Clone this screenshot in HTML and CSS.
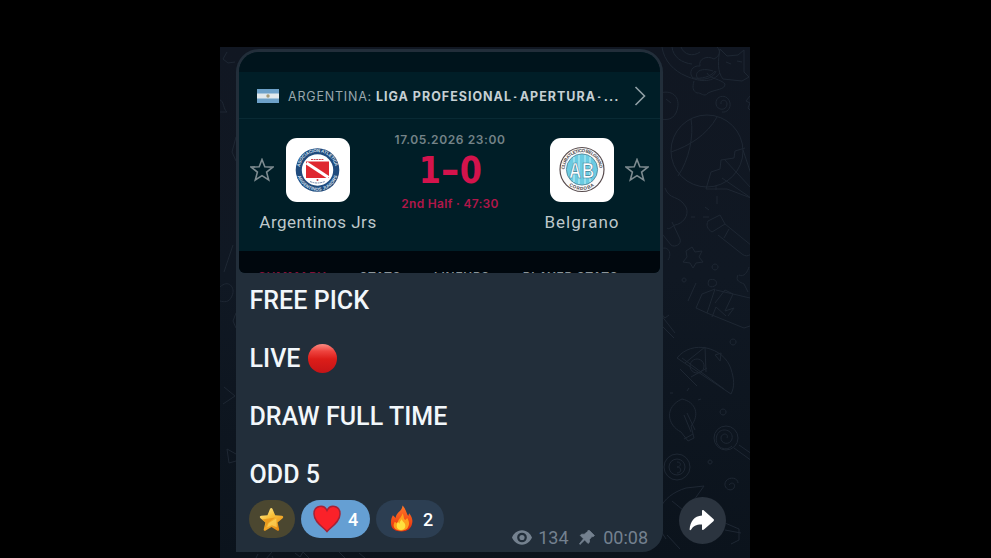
FILE: index.html
```
<!DOCTYPE html>
<html lang="en">

<head>
  <meta charset="UTF-8" />
  <meta name="viewport" content="width=device-width, initial-scale=1.0" />
  <title>Free pick</title>
  <link rel="stylesheet" href="styles.css">
</head>

<body>
  <div class="chat">
    <!-- wallpaper doodles -->
    <svg class="wallpaper" viewBox="0 0 530 511" fill="none">
      <path d="M442 0c2 14 12 24 24 29 16 7 27 6 34-3m-48-26c1 10 10 16 20 17m-11-17c3 8 12 10 19 5m17-5c4 4 3 9-3 12-7-4-16 0-14 7-8-1-12 7-7 12 8 1 18-1 22-7m-2 0c-12-4-20 1-15 8 9 1 16-2 18-8M500 2l7 7 11-1 6-5v22l5 5-7 4-19-2c-6-7-5-19-3-30m6 13 5 2m6-3 5 1M474 34c-2 7-1 10 3 12 4-1 7 5 11 0 8-4 17-3 17-9-4-5-15-5-18-11" />
      <path d="M501 57c-1-5 6-5 6 0 0 7-10 7-11 0-1-9 12-11 14-1 1 5-3 10-8 9M530 49l-4 5 4 2-2 5 2 2M440 46c14-4 22 6 16 20-4 7-9 7-16 6m6-20 5 4" />
      <circle cx="487" cy="104" r="36" />
      <path d="M471 72c3 17-2 41-13 57m-7-24c18-6 36-17 46-35m28 31-10 3-1 7-13 2-1 9-9 3-5 17h21l24 9-29-20m2-19 27 29m-8-38 10 30" />
      <path d="M445 141c5 13 13 6 21 19 4 9-4 17-11 18-4 2-6 5-8 3m-8 2 12 15c4 3 11-1 9-6l-8-17m44-36v4m1 6v8m-12 3 4 3m-18 7h4m8 0h6" />
      <path d="m488 174 12-6 5 9-13 8c-5-3-6-7-4-11m17 3 27 22c3 7-4 13-10 8l-24-19m11-6-5 9" />
      <path d="m472 200 3 5 7-1-3 6 4 5-7 1-3 5-3-5-7-1 4-5-1-6zM519 228c5 3 9-4 10-8m-11 8c-3 6 2 7 6 9l4 8M495 217a3 3 0 1 0 .1 0M464 231a2 2 0 1 0 .1 0M489 233c5-2 9 1 7 5-5 4-10 1-7-5" />
      <path d="M482 247l13-5-8 24-11-5zm14-4 34 8m-43 15 37 15 6-2m-38-9 4-10 10 9m-11-13 10-13 8 4-8 17 9-3-6 8m-32-33-8 18M440 203c7-6 13 3 8 10m-10 50 7 8 4-3m-9 9 14 14m-13-23 14 18" />
      <path d="M457 311c15-19 47-11 54 11 3 10 4 17 0 25l-54-36zm5 0 42 31m-39-26 20-16 1 25m-9-13a7 7 0 1 0 .1 0m18-4 6-2-1 8zM513 292a3 3 0 1 0 .1 0M460 322l17 17m-6-9 16-9" />
      <path d="M462 352c14 3 18 16 9 27l3 12-6 3-7-9c-14-7-17-25 1-33m2 16 7 17m-4-19 8 17m-11 9 9-5M503 362a3 3 0 1 0 .1 0M450 346h3m14-2 2-3m9 12 3-1" />
      <circle cx="506" cy="391" r="12" />
      <path d="M507 391c2-4-4-6-6-1-1 7 9 9 11 2 2-9-11-13-15-4-4 11 8 18 15 11m2 2 18 13m-13-16 13 9M490 413a2 2 0 1 0 .1 0" />
      <circle cx="457" cy="420" r="13" />
      <circle cx="457" cy="420" r="8" />
      <path d="M457 415c5 0 4 5 0 5 5 0 5 6 0 6m52 12c3-4 7-1 5 3-4 5-12-1-8-7 4-5 12-3 12 2M446 492c-16-22-6-43 20-51l18-2-10 14m-22 1 22 18m31 4 14 6v11l-8 4m-6-14 16 3M447 488l13 14" />
      <path d="M7 5 3 12l5 4 7-1M0 53c4 1 3 9 7 12H0M16 90l-4 15 4 9M13 198 4 225M0 240c8-8 16 0 12 9-3 7-8 6-12 5m16 12-3 8 3 7M4 340l11 9-12 8m13 50-9-5 2 14 7-2M38 507l-4 8m18-10-7 8m7-4 3 6M75 506l5 4 3-5 6 6m30-6 10 10m10-9 6 5" />
    </svg>

    <div class="bubble">
      <div class="photo">
        <div class="status"></div>
        <div class="league">
          <svg class="flag" viewBox="0 0 22 14">
            <path fill="#6da1c9" d="M0 0h22v14H0z" />
            <path fill="#e2e9ec" d="M0 4.5h22v5H0z" />
            <circle cx="11" cy="7" r="1.7" fill="#a59b79" />
          </svg>
          <span class="country">ARGENTINA:</span>
          <span class="name">LIGA PROFESIONAL <i>-</i> APERTURA <i>-</i> ...</span>
          <svg class="chevron" viewBox="0 0 12 20">
            <path d="m1.5 1 9 9-9 9" />
          </svg>
        </div>
        <div class="match">
          <svg class="star" viewBox="0 0 24 24">
            <path d="m12 1.5 2.8 7.2 8 .4-6.2 5 2.1 7.9-6.7-4.4L5.3 22l2.1-7.9-6.2-5 8-.4z" />
          </svg>
          <div class="team home">
            <div class="crest">
              <svg viewBox="0 0 64 64">
                <defs>
                  <path id="top1" d="M13.5 32a18 18 0 0 1 36 0" />
                  <path id="bot1" d="M10.8 32a20.7 20.7 0 0 0 41.4 0" />
                </defs>
                <circle cx="31.5" cy="32" r="21.8" fill="#204b7d" />
                <circle cx="31.5" cy="32" r="15.7" fill="#fff" />
                <g class="ring blue">
                  <text><textPath href="#top1" startOffset="3" textLength="50">ASOCIACION ATLETICA</textPath></text>
                  <text><textPath href="#bot1" startOffset="6" textLength="53">ARGENTINOS JUNIORS</textPath></text>
                </g>
                <path fill="#df2830" d="M20 23.5h23V40H20z" />
                <path stroke="#fff" stroke-width="3.2" d="m20.5 25 22 14.5" />
                <path stroke="#c4434d" stroke-dasharray="2 .6" d="M25 21.5h13" />
                <path stroke="#7185a7" stroke-dasharray="2 .6" d="M24 43.5q7 3 15 0" fill="none" />
                <circle cx="31.5" cy="42" r="1" fill="#c4434d" />
              </svg>
            </div>
            <p>Argentinos Jrs</p>
          </div>
          <div class="result">
            <p class="date">17.05.2026 23:00</p>
            <p class="score"><span>1</span><b>-</b><span>0</span></p>
            <p class="time">2nd Half · 47:30</p>
          </div>
          <div class="team away">
            <div class="crest">
              <svg viewBox="0 0 64 64">
                <defs>
                  <path id="top2" d="M14.6 31.5a17.4 17.4 0 0 1 34.8 0" />
                  <path id="bot2" d="M11.6 31.5a20.4 20.4 0 0 0 40.8 0" />
                </defs>
                <circle cx="32" cy="31.5" r="22" fill="#fafafa" stroke="#584c4e" stroke-width="1.2" />
                <circle cx="32" cy="31.5" r="15.6" fill="#6bcbe2" stroke="#477c91" stroke-width=".8" />
                <path stroke="#96dfed" stroke-width="2" d="M24 19v25m5-27v29m6-29v29m5-27v25" />
                <g class="ring dark">
                  <text><textPath href="#top2" startOffset="0" textLength="54">CLUB ATLETICO BELGRANO</textPath></text>
                  <text><textPath href="#bot2" startOffset="18" textLength="28">CORDOBA</textPath></text>
                </g>
                <text class="initials" x="19" y="39.5" textLength="26" lengthAdjust="spacingAndGlyphs">AB</text>
              </svg>
            </div>
            <p>Belgrano</p>
          </div>
          <svg class="star" viewBox="0 0 24 24">
            <path d="m12 1.5 2.8 7.2 8 .4-6.2 5 2.1 7.9-6.7-4.4L5.3 22l2.1-7.9-6.2-5 8-.4z" />
          </svg>
        </div>
        <div class="tabs">
          <span class="current">SUMMARY</span>
          <span>STATS</span>
          <span>LINEUPS</span>
          <span>PLAYER STATS</span>
        </div>
      </div>

      <div class="caption">
        <p>FREE PICK</p>
        <p>LIVE <i class="red"></i></p>
        <p>DRAW FULL TIME</p>
        <p>ODD 5</p>
      </div>

      <div class="footer">
        <div class="reactions">
          <span class="pill gold">
            <svg width="25" height="25" viewBox="0 0 26 26">
              <defs>
                <linearGradient id="gold" x1="0" y1="0" x2=".7" y2="1">
                  <stop offset="0" stop-color="#fff3a8" />
                  <stop offset=".45" stop-color="#f9c23c" />
                  <stop offset="1" stop-color="#e88a12" />
                </linearGradient>
              </defs>
              <path fill="url(#gold)" d="M11.4 2c.7-1.4 2.1-1.4 2.7 0l2.7 6.6 7 .5c1.5.2 1.9 1.7.8 2.6l-5.3 4.5 1.6 6.8c.3 1.5-.9 2.3-2.1 1.5L13 20.8l-6 3.7c-1.3.7-2.4-.1-2-1.5l1.7-6.8-5.2-4.5C.4 10.7.8 9.3 2.3 9.1l6.5-.5z" />
              <path fill="#e69218" d="m3 13 14-2-7 5-4 6 1-6z" opacity=".8" />
              <path fill="#ffdc64" d="m10 17 8-5 .5 9-5-2-5 2z" opacity=".6" />
            </svg>
          </span>
          <span class="pill liked">
            <svg width="28" height="28" viewBox="0 0 28 28">
              <path fill="#fb2129" stroke="#a52236" stroke-width="1.5" d="M14 26.5C10 22 1 17 1 9c0-9 10-10 13-3.500C17-1 27 0 27 9c0 8-9 13-13 17.500z" />
            </svg>
            4
          </span>
          <span class="pill fire">
            <svg width="23" height="28" viewBox="0 0 24 28">
              <defs>
                <linearGradient id="flame" x1="0" y1="0" x2="0" y2="1">
                  <stop offset="0" stop-color="#ff7627" />
                  <stop offset=".6" stop-color="#f24c17" />
                  <stop offset="1" stop-color="#dd2a10" />
                </linearGradient>
              </defs>
              <path fill="url(#flame)" d="M13 0c4 4 4 8 6 11l1-3c3 4 4 7 3 11-1 5-5 8-11 8S1 25 1 18c0-4 1-6 2-8l3 3C6 7 13 6 13 0z" />
              <path fill="#ff9f1c" d="M13 8c2 4 1 6 3 7l2-2c3 5 2 8 0 11-3 3-10 3-13 0-2-3-1-5 0-7l3 2c0-5 4-6 5-11z" />
              <path fill="#ffe13e" d="M12 14c1 3 4 4 4 7 0 6-9 6-9 0 0-2 1-3 1-4l2 2c0-3 2-3 2-5z" />
            </svg>
            2
          </span>
        </div>
        <div class="meta">
          <svg width="20" height="15" viewBox="0 0 21 15">
            <path fill="#74818f" fill-rule="evenodd" d="M10.5 0C16 0 19.5 4 21 7.5 19.5 11 16 15 10.5 15S1.500 11 0 7.5C1.5 4 5 0 10.5 0zm0 2.4a5.1 5.1 0 1 0 0 10.2 5.1 5.1 0 0 0 0-10.2z" />
            <circle cx="10.5" cy="7.5" r="2.7" fill="#74818f" />
          </svg>
          <span class="views">134</span>
          <svg width="16" height="15" viewBox="0 0 16 15">
            <path fill="#74818f" stroke="#74818f" stroke-width=".7" stroke-linejoin="round" d="m10.5.5 5 5-1.5 1.3-1-.3-2.5 3v2.7L9 13.5 5.7 10 1 14.5l-.6-.7 4.1-5L1.2 5.5l1.3-1.3h2.7l3.5-2.7L8.900.5z" />
          </svg>
          <span class="clock">00:08</span>
        </div>
      </div>
    </div>

    <div class="share">
      <svg width="26" height="21" viewBox="0 0 26 21">
        <path fill="#fff" d="M13 1.2c0-1.200 1-1.500 1.900-.7l9.500 8.500c.8.7.8 1.500 0 2.200l-9.500 8.400c-.9.800-1.900.4-1.900-.7v-4.300C7 14.500 4.500 16 2 19.800c-.6.800-1.500.5-1.400-.5C1.300 11.500 5 6 13 5.500z" />
      </svg>
    </div>
  </div>
</body>

</html>
```
FILE: styles.css
```
* {
  margin: 0;
  padding: 0;
  box-sizing: border-box;
}

body {
  height: 558px;
  padding: 47px 0 0 220px;
  background-color: #000;
  font-family: Roboto, "Liberation Sans", sans-serif;
  overflow: hidden;
}

svg {
  display: block;
  flex: none;
}

.chat {
  position: relative;
  display: flex;
  width: 530px;
  height: 511px;
  padding: 2px 0 0 16px;
  background: linear-gradient(#111722, #101823 45%, #0b131c);
  overflow: hidden;
}

.wallpaper {
  position: absolute;
  left: 0;
  top: 0;
  width: 530px;
  height: 511px;
  stroke: #1e2733;
  stroke-width: 1;
}

.bubble {
  position: relative;
  width: 427px;
  height: 503px;
  padding: 3px 3px 0;
  border-radius: 23px 23px 21px 0;
  background-color: #222e3a;
}

.photo {
  height: 221px;
  border-radius: 20px 20px 6px 6px;
  background-color: #001e27;
  overflow: hidden;
}

.status {
  height: 20px;
  background-color: #00141c;
}

/* league row */
.league {
  display: flex;
  align-items: center;
  height: 47px;
  padding: 2px 0 0 18px;
  border-bottom: 1px solid #092a34;
  font-family: Inter, sans-serif;
  font-size: 12.5px;
  color: #9aa8ae;
  white-space: nowrap;
}

.flag {
  width: 22px;
  height: 14px;
  margin-right: 9px;
}

.country {
  width: 88px;
  letter-spacing: .8px;
}

.name {
  width: 250px;
  font-weight: 700;
  letter-spacing: 1px;
  color: #c6d0d4;
}

.name i {
  display: inline-block;
  margin: 0 -3px 0 -4px;
  font-style: normal;
  transform: scaleX(.55);
}

.chevron {
  width: 12px;
  height: 20px;
  margin-left: 8px;
  fill: none;
  stroke: #91a0a6;
  stroke-width: 1.6;
}

/* match */
.match {
  display: flex;
  height: 132px;
  padding: 19px 11px 0;
}

.star {
  width: 24px;
  height: 24px;
  margin-top: 20px;
  fill: none;
  stroke: #7d8b90;
  stroke-width: 1.6;
}

.team {
  display: flex;
  flex-direction: column;
  align-items: center;
  flex: none;
  width: 118px;
  color: #bec8cb;
  font-size: 17px;
  letter-spacing: .5px;
  white-space: nowrap;
}

.home {
  margin-left: -15px;
}

.away {
  margin-right: -16px;
  letter-spacing: 1px;
}

.team p {
  margin-top: 9px;
  line-height: 22px;
}

.crest {
  width: 64px;
  height: 64px;
  border-radius: 11px;
  background-color: #fff;
}

.ring {
  font-family: "Liberation Sans", sans-serif;
  font-size: 4.5px;
  font-weight: 700;
}

.blue {
  fill: #d5e0ed;
}

.dark {
  fill: #484448;
}

.initials {
  font-family: "Liberation Sans", sans-serif;
  font-size: 22px;
  font-weight: 700;
  fill: #fff;
  stroke: #357e96;
  stroke-width: .7;
}

.result {
  flex: none;
  width: 146px;
  margin: -5px 0 0;
  text-align: center;
  white-space: nowrap;
}

.date {
  height: 14px;
  font-family: Inter, sans-serif;
  font-size: 12px;
  font-weight: 600;
  line-height: 14px;
  letter-spacing: .6px;
  color: #748388;
}

.score {
  display: flex;
  justify-content: center;
  height: 45px;
  margin-top: 1px;
  font-family: "DejaVu Sans", sans-serif;
  font-size: 37px;
  font-weight: 700;
  line-height: 45px;
  color: #d4134c;
}

.score span {
  width: 25px;
  margin: 0 -1px;
  transform: scaleX(.86);
}

.score b {
  width: 18px;
  transform: scaleX(1.25);
}

.time {
  margin-top: 4px;
  font-family: Inter, sans-serif;
  font-size: 12px;
  font-weight: 600;
  line-height: 14px;
  letter-spacing: .3px;
  color: #b0174a;
}

.tabs {
  display: flex;
  height: 22px;
  padding: 18px 0 0 19px;
  background-color: #00070d;
  font-family: Inter, sans-serif;
  font-size: 12px;
  font-weight: 600;
  line-height: 15px;
  letter-spacing: .7px;
  color: #8d979b;
  white-space: nowrap;
}

.tabs span {
  margin-right: 33px;
}

.tabs .current {
  color: #851039;
}

/* message text */
.caption {
  padding: 13px 10.5px 0;
  font-size: 25px;
  font-weight: 500;
  line-height: 29px;
  letter-spacing: .05px;
  color: #f2f7fb;
}

.caption p {
  display: flex;
  align-items: center;
  height: 29px;
  margin-bottom: 29px;
}

.red {
  width: 29px;
  height: 29px;
  margin-left: 7px;
  border-radius: 50%;
  background: linear-gradient(#fb8b82, #ee433e 25%, #dc1d19 52%, #c51417);
}

.footer {
  display: flex;
  justify-content: space-between;
  margin-top: -18px;
  padding: 0 12px 0 10px;
}

.reactions {
  display: flex;
  gap: 6px;
}

.pill {
  display: flex;
  align-items: center;
  justify-content: center;
  height: 38px;
  border-radius: 19px;
  font-size: 18px;
  font-weight: 500;
  color: #fff;
}

.gold {
  width: 46px;
  padding-right: 2px;
  background-color: #4b4730;
}

.liked {
  width: 69px;
  gap: 7px;
  background-color: #659fd3;
}

.fire {
  width: 68px;
  gap: 10px;
  padding-left: 3px;
  background-color: #2c3e52;
}

.meta {
  display: flex;
  align-items: center;
  height: 22px;
  margin-top: 26px;
  font-size: 18px;
  color: #74818f;
}

.views {
  width: 30px;
  margin: 0 11px 0 6px;
}

.clock {
  margin-left: 8px;
}

.share {
  position: relative;
  display: flex;
  align-items: center;
  justify-content: center;
  width: 47px;
  height: 47px;
  margin: 448px 0 0 15.5px;
  border-radius: 50%;
  background-color: #2b343f;
}
```
